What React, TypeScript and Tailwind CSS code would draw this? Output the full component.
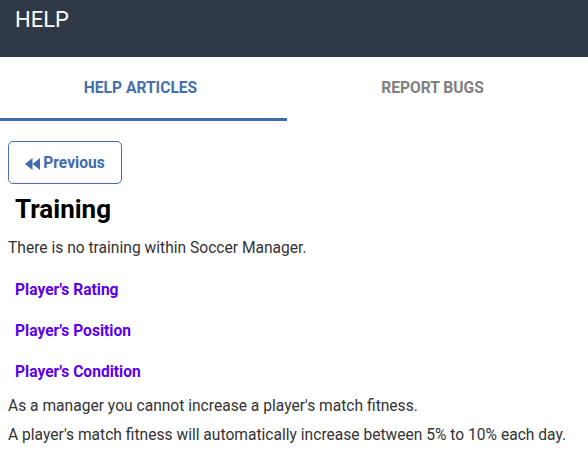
import React, { useState } from 'react';

const links = ["Player's Rating", "Player's Position", "Player's Condition"];

const BackwardIcon = () => (
    <svg width="15" height="12" viewBox="0 0 15 12" className="fill-current shrink-0">
        <path d="M7.5 0 L0 6 L7.5 12 Z" />
        <path d="M15 0 L7.5 6 L15 12 Z" />
    </svg>
);

export default function App() {
    const [tab, setTab] = useState(0);

    return (
        <div className="w-[588px] h-[454px] overflow-hidden bg-white font-['Roboto',sans-serif]">
            {/* Header */}
            <div className="h-[57px] bg-[#2f3946] px-[15px] pt-[4px]">
                <h1 className="text-[22px] leading-[32px] text-white">HELP</h1>
            </div>

            {/* Tabs */}
            <div className="flex h-[64px]">
                {['HELP ARTICLES', 'REPORT BUGS'].map((t, i) => (
                    <button
                        key={t}
                        onClick={() => setTab(i)}
                        className={`flex items-center justify-center pt-[2px] text-[15.6px] font-bold border-b-[3px] ${
                            i === 0 ? 'w-[287px] pr-[6px]' : 'flex-1 pr-[10px]'
                        } ${
                            tab === i
                                ? 'text-[#4470ab] border-[#3f6eaa]'
                                : 'text-[#808080] border-transparent'
                        }`}
                    >
                        <span>{t}</span>
                    </button>
                ))}
            </div>

            {/* Content */}
            <div className="px-[8px] pt-[20px]">
                <button className="flex items-center gap-[3px] pt-[2px] h-[43px] w-[114px] justify-center border border-[#4a6ea6] rounded-[5px] text-[#3f6ab0] text-[15.6px] font-bold">
                    <BackwardIcon />
                    <span>Previous</span>
                </button>

                <h2 className="mt-[10px] px-[7px] text-[26px] leading-[30px] font-bold text-black">Training</h2>

                <p className="mt-[13px] text-[15.6px] leading-[22px] text-[#333333]">
                    There is no training within Soccer Manager.
                </p>

                <div className="mt-[20px] flex flex-col gap-[19px]">
                    {links.map((l) => (
                        <a key={l} href="#" className="px-[7px] text-[15.6px] leading-[22px] font-bold text-[#5a00f0]">
                            {l}
                        </a>
                    ))}
                </div>

                <p className="mt-[12px] text-[15.6px] leading-[22px] text-[#333333]">
                    As a manager you cannot increase a player's match fitness.
                </p>
                <p className="mt-[7px] text-[15.6px] leading-[22px] text-[#333333]">
                    A player's match fitness will automatically increase between 5% to 10% each day.
                </p>
            </div>
        </div>
    );
}
